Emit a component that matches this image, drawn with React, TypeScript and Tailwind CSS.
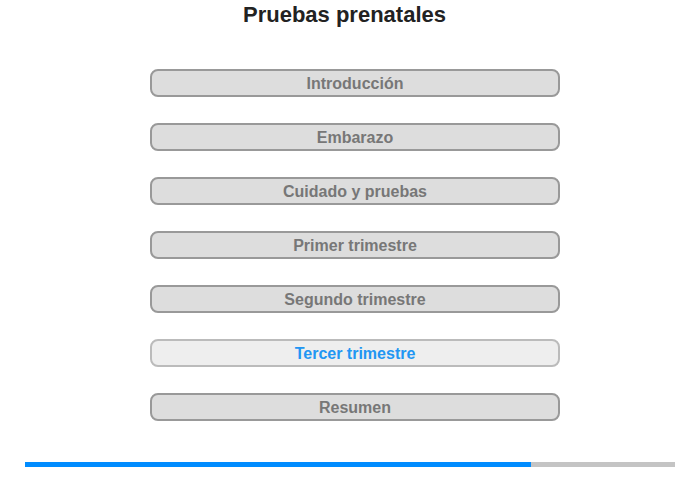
export default function App() {
  const items = [
    "Introducción",
    "Embarazo",
    "Cuidado y pruebas",
    "Primer trimestre",
    "Segundo trimestre",
    "Tercer trimestre",
    "Resumen",
  ];
  const active = 5;
  return (
    <div className="w-[700px] h-[480px] bg-white relative" style={{ fontFamily: '"Liberation Sans", Arial, sans-serif' }}>
      <h1 className="pt-[2px] pr-[11px] text-center text-[22px] leading-[25px] font-bold text-[#222]">Pruebas prenatales</h1>
      <div className="mt-[42px] ml-[150px] w-[410px] flex flex-col gap-[26px]">
        {items.map((t, i) => (
          <div
            key={t}
            className={
              i === active
                ? "h-[28px] pt-[2px] rounded-[8px] border-2 border-[#bbbbbb] bg-[#eeeeee] text-[#2196f3] flex items-center justify-center text-[16px] font-bold"
                : "h-[28px] pt-[2px] rounded-[8px] border-2 border-[#999999] bg-[#dddddd] text-[#777777] flex items-center justify-center text-[16px] font-bold"
            }
          >
            {t}
          </div>
        ))}
      </div>
      <div className="mt-[41px] ml-[25px] w-[650px] h-[5px] bg-[#c4c4c4] flex">
        <div className="h-full w-[506px] bg-[#008cff]" />
      </div>
    </div>
  );
}
